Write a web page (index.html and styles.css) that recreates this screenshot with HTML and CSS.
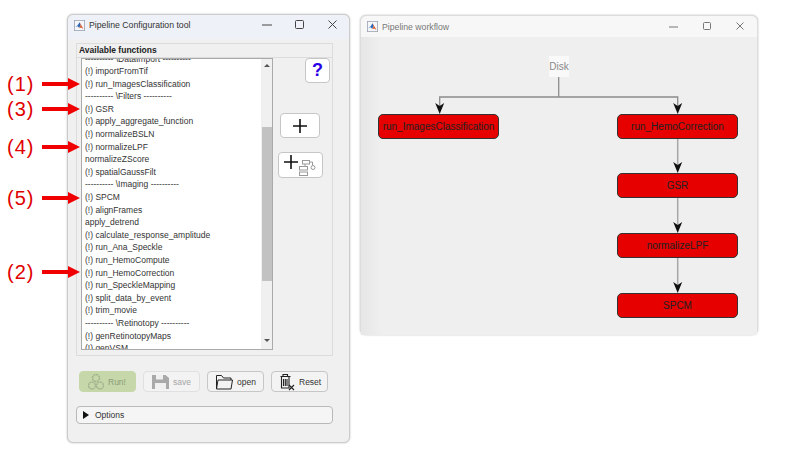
FILE: index.html
```html
<!DOCTYPE html>
<html lang="en">
<head>
    <meta charset="UTF-8">
    <title>Pipeline Configuration tool</title>
    <link rel="stylesheet" href="styles.css">
</head>
<body>
    <svg width="0" height="0" class="defs">
        <symbol id="matlab" viewBox="0 0 14 14">
            <rect x="0.5" y="0.5" width="13" height="13" fill="#f4f6fa" stroke="#9aa2b0"/>
            <path d="M1.500 8.500l3-1.500L7 3l1.500 3.500-2 3.500-2-2z" fill="#2a66b8"/>
            <path d="M7 3l2 3 3 5.500-3-2-2.500 1 2-3.500z" fill="#d9541e"/>
        </symbol>
    </svg>

    <div class="window config">
        <div class="titlebar">
            <svg class="app-icon"><use href="#matlab"/></svg>
            <span class="title">Pipeline Configuration tool</span>
            <div class="win-btns">
                <svg width="12" height="12" viewBox="0 0 12 12"><path d="M1 6h10" stroke="#444" fill="none"/></svg>
                <svg width="12" height="12" viewBox="0 0 12 12"><rect x="1.500" y="1.500" width="8" height="8" rx="1" stroke="#444" fill="none"/></svg>
                <svg width="12" height="12" viewBox="0 0 12 12"><path d="M1.500 1.500l8 8M9.500 1.500l-8 8" stroke="#444" fill="none"/></svg>
            </div>
        </div>

        <div class="panel">
            <div class="panel-head">Available functions</div>
            <div class="panel-body">
                <div class="listbox">
                    <div class="list-rows">
                        <div class="row clipped-top">---------- \DataImport ----------</div>
                        <div class="row">(!) importFromTif</div>
                        <div class="row">(!) run_ImagesClassification</div>
                        <div class="row">---------- \Filters ----------</div>
                        <div class="row">(!) GSR</div>
                        <div class="row">(!) apply_aggregate_function</div>
                        <div class="row">(!) normalizeBSLN</div>
                        <div class="row">(!) normalizeLPF</div>
                        <div class="row">normalizeZScore</div>
                        <div class="row">(!) spatialGaussFilt</div>
                        <div class="row">---------- \Imaging ----------</div>
                        <div class="row">(!) SPCM</div>
                        <div class="row">(!) alignFrames</div>
                        <div class="row">apply_detrend</div>
                        <div class="row">(!) calculate_response_amplitude</div>
                        <div class="row">(!) run_Ana_Speckle</div>
                        <div class="row">(!) run_HemoCompute</div>
                        <div class="row">(!) run_HemoCorrection</div>
                        <div class="row">(!) run_SpeckleMapping</div>
                        <div class="row">(!) split_data_by_event</div>
                        <div class="row">(!) trim_movie</div>
                        <div class="row">---------- \Retinotopy ----------</div>
                        <div class="row">(!) genRetinotopyMaps</div>
                        <div class="row">(!) genVSM</div>
                    </div>
                    <div class="scrollbar">
                        <span class="arrow-up"></span>
                        <span class="thumb"></span>
                        <span class="arrow-down"></span>
                    </div>
                </div>
                <div class="side-tools">
                    <button class="btn help">?</button>
                    <button class="btn add">
                        <svg width="16" height="16" viewBox="0 0 16 16"><path d="M8 1v14M1 8h14" stroke="#111" stroke-width="1.600" fill="none"/></svg>
                    </button>
                    <button class="btn add-tree">
                        <svg width="40" height="24" viewBox="0 0 40 24">
                            <path d="M10 2v14M3 9h14" stroke="#111" stroke-width="1.600" fill="none"/>
                            <g fill="none" stroke="#999">
                                <rect x="21.500" y="7.500" width="7" height="3.500"/>
                                <rect x="18.500" y="13.500" width="8" height="3.500"/>
                                <rect x="18.500" y="19" width="8" height="3.500"/>
                                <path d="M24 11v2.500M28.500 9h3v3"/>
                                <circle cx="32" cy="14.500" r="2"/>
                            </g>
                        </svg>
                    </button>
                </div>
            </div>
        </div>

        <div class="actions">
            <button class="btn action run">
                <svg width="16" height="18" viewBox="0 0 16 18">
                    <g fill="none" stroke="#9fb38d" stroke-width="1.500" stroke-dasharray="2 0.700">
                        <circle cx="8" cy="5" r="3.500"/>
                        <circle cx="4" cy="12.500" r="3.500"/>
                        <circle cx="12" cy="12.500" r="3.500"/>
                    </g>
                </svg>
                <span>Run!</span>
            </button>
            <button class="btn action save">
                <svg width="17" height="16" viewBox="0 0 17 16">
                    <path d="M0 1h13.500L17 4v11H0z" fill="#a9a9a9"/>
                    <rect x="4" y="1" width="7" height="4.500" fill="#f0f0f0"/>
                    <rect x="3" y="9" width="11" height="6" fill="#f0f0f0"/>
                </svg>
                <span>save</span>
            </button>
            <button class="btn action">
                <svg width="17" height="16" viewBox="0 0 17 16">
                    <path d="M0.500 15V1.500h5l2 2.500h7.500V6M0.500 15l1.500-9h14.500l-1.500 9z" fill="none" stroke="#222"/>
                </svg>
                <span>open</span>
            </button>
            <button class="btn action">
                <svg width="15" height="18" viewBox="0 0 15 18">
                    <path d="M0.500 3.500h10M3 3V1.500h4.500V3M1.500 4v11h7.500V4M3.500 6v7M5.300 6v7M7 6v7" fill="none" stroke="#222" stroke-width="1.100"/>
                    <path d="M9 12l5 5M14 12l-5 5" stroke="#222" stroke-width="1.100"/>
                </svg>
                <span>Reset</span>
            </button>
        </div>

        <div class="options">
            <span class="tri"></span>
            <span>Options</span>
        </div>
    </div>

    <div class="window workflow">
        <div class="titlebar">
            <svg class="app-icon"><use href="#matlab"/></svg>
            <span class="title">Pipeline workflow</span>
            <div class="win-btns faded">
                <svg width="12" height="12" viewBox="0 0 12 12"><path d="M0 6h9" stroke="#777" fill="none"/></svg>
                <svg width="12" height="12" viewBox="0 0 12 12"><rect x="1.500" y="1.500" width="7" height="7" rx="1" stroke="#777" fill="none"/></svg>
                <svg width="12" height="12" viewBox="0 0 12 12"><path d="M1.500 1.500l7 7M8.500 1.500l-7 7" stroke="#777" fill="none"/></svg>
            </div>
        </div>
        <div class="canvas">
            <svg class="edges" width="398" height="298" viewBox="0 0 398 298">
                <g fill="none" stroke="#8c8c8c" stroke-width="1.300">
                    <path d="M197.700 40v20"/>
                    <path d="M78.700 70V60H316.700V70"/>
                </g>
                <g fill="none" stroke="#a8a8a8" stroke-width="1.500">
                    <path d="M316.700 102v26M316.700 161v27M316.700 221v27"/>
                </g>
                <path class="head" d="M74.200 66l4.500 3 4.500-3-4.500 11z"/>
                <path class="head" d="M312.200 66l4.500 3 4.500-3-4.500 11z"/>
                <path class="head" d="M312.200 125l4.500 3 4.500-3-4.500 11z"/>
                <path class="head" d="M312.200 185l4.500 3 4.500-3-4.500 11z"/>
                <path class="head" d="M312.200 245l4.500 3 4.500-3-4.500 11z"/>
            </svg>
            <div class="disk">Disk</div>
            <div class="node n-images">run_ImagesClassification</div>
            <div class="node n-hemo">run_HemoCorrection</div>
            <div class="node n-gsr">GSR</div>
            <div class="node n-lpf">normalizeLPF</div>
            <div class="node n-spcm">SPCM</div>
        </div>
    </div>

    <div class="callout c1">(1)</div>
    <div class="callout c2">(2)</div>
    <div class="callout c3">(3)</div>
    <div class="callout c4">(4)</div>
    <div class="callout c5">(5)</div>
</body>
</html>
```

FILE: styles.css
```css
* {
    box-sizing: border-box;
}
html, body {
    margin: 0;
    height: 100%;
    overflow: hidden;
    background: #fff;
    font-family: "Liberation Sans", Arial, sans-serif;
}
.defs {
    position: absolute;
}
.window {
    position: absolute;
    background: #f0f0f0;
    border-radius: 6px;
    box-shadow: 0 0 2px #bbb;
}
.config {
    left: 67px;
    top: 14px;
    width: 283px;
    height: 429px;
    padding: 0 8px;
    border: 1px solid #ccc;
}
.workflow {
    left: 360px;
    top: 15px;
    width: 398px;
    height: 320px;
    border: 1px solid #ddd;
}
.titlebar {
    display: flex;
    align-items: center;
    height: 21px;
    gap: 4px;
    font-size: 8.700px;
    color: #333;
}
.config .titlebar {
    background: #eef1f7;
    margin: 0 -8px;
    padding: 0 6px 4px;
    height: 24px;
    border-radius: 6px 6px 0 0;
}
.workflow .titlebar {
    background: #f7f7f7;
    padding: 0 6px;
    color: #777;
    border-radius: 6px 6px 0 0;
}
.app-icon {
    width: 11px;
    height: 11px;
    flex: none;
}
.title {
    flex: 1;
}
.win-btns {
    display: flex;
    gap: 21px;
    margin-right: 4px;
}
.panel {
    margin-top: 4px;
    width: 257px;
    height: 313px;
    border: 1px solid #dcdcdc;
    display: flex;
    flex-direction: column;
}
.panel-head {
    height: 14px;
    padding: 1px 2px;
    font-size: 8.500px;
    font-weight: bold;
    color: #222;
    border-bottom: 1px solid #dcdcdc;
}
.panel-body {
    display: flex;
    padding: 0 0 0 4px;
    flex: 1;
}
.listbox {
    width: 192px;
    height: 292px;
    background: #fff;
    border: 1px solid #aaa;
    display: flex;
    overflow: hidden;
}
.list-rows {
    flex: 1;
    overflow: hidden;
    padding-left: 3px;
    font-size: 8.500px;
    color: #333;
}
.row {
    height: 12.600px;
    line-height: 12.600px;
    white-space: nowrap;
}
.clipped-top {
    margin-top: -6.500px;
}
.scrollbar {
    width: 11px;
    background: #f0f0f0;
    display: flex;
    flex-direction: column;
    align-items: center;
    padding-top: 5px;
}
.arrow-up {
    border: 3px solid transparent;
    border-top: 0;
    border-bottom: 3px solid #555;
}
.thumb {
    width: 10px;
    height: 154px;
    margin-top: 60px;
    background: #c2c2c2;
}
.arrow-down {
    margin-top: 58px;
    border: 3px solid transparent;
    border-bottom: 0;
    border-top: 3px solid #555;
}
.side-tools {
    flex: 1;
    display: flex;
    flex-direction: column;
    align-items: flex-start;
    padding-left: 5px;
}
.btn {
    display: flex;
    align-items: center;
    justify-content: center;
    padding: 0;
    background: #fff;
    border: 1px solid #c6c6c6;
    border-radius: 4px;
    font-family: inherit;
}
.help {
    width: 25px;
    height: 25px;
    margin: 0 0 30px 27px;
    font-size: 18px;
    font-weight: bold;
    color: #2a00e6;
}
.add {
    width: 40px;
    height: 25px;
    margin: 0 0 14px 2px;
}
.add-tree {
    width: 45px;
    height: 26px;
    align-items: flex-start;
}
.actions {
    display: flex;
    gap: 7px;
    margin: 15px 0 0 3px;
}
.action {
    width: 57px;
    height: 21px;
    gap: 4px;
    justify-content: flex-start;
    padding-left: 8px;
    background: #f3f3f3;
    font-size: 8.500px;
    color: #333;
}
.run {
    background: #c6d8a9;
    border-color: #c6d8a9;
    color: #8b9b7a;
}
.save {
    color: #a6a6a6;
    border-color: #e0e0e0;
}
.options {
    display: flex;
    align-items: center;
    gap: 6px;
    margin-top: 14px;
    width: 257px;
    height: 18px;
    padding-left: 6px;
    background: #f5f5f5;
    border: 1px solid #b9b9b9;
    border-radius: 4px;
    font-size: 8.500px;
    color: #333;
}
.tri {
    border: 4px solid transparent;
    border-right: 0;
    border-left: 6px solid #111;
}
.canvas {
    position: relative;
    height: 298px;
    background: linear-gradient(90deg, #e6e6e6 0, #efefef 20px);
}
.edges {
    position: absolute;
    left: 0;
    top: 0;
}
.head {
    fill: #111;
}
.disk {
    position: absolute;
    left: 188px;
    top: 19px;
    width: 20px;
    height: 21px;
    background: #f9f9f9;
    color: #888;
    font-size: 10px;
    line-height: 21px;
    text-align: center;
}
.node {
    position: absolute;
    width: 121px;
    height: 25px;
    background: #e60000;
    border: 1px solid #333;
    border-radius: 5px;
    font-size: 10px;
    line-height: 23px;
    text-align: center;
    color: #222;
    white-space: nowrap;
}
.n-images {
    left: 17px;
    top: 77px;
}
.n-hemo {
    left: 256px;
    top: 77px;
}
.n-gsr {
    left: 256px;
    top: 136px;
}
.n-lpf {
    left: 256px;
    top: 196px;
}
.n-spcm {
    left: 256px;
    top: 256px;
}
.callout {
    position: absolute;
    left: 7px;
    width: 74px;
    font-size: 20px;
    letter-spacing: 1px;
    line-height: 22px;
    color: #e00000;
}
.callout::before {
    content: "";
    position: absolute;
    left: 35px;
    top: 9px;
    width: 27px;
    height: 4px;
    background: #f00000;
}
.callout::after {
    content: "";
    position: absolute;
    left: 61px;
    top: 4.500px;
    border: 6.500px solid transparent;
    border-right: 0;
    border-left: 12px solid #f00000;
}
.c1 { top: 73px; }
.c2 { top: 261px; }
.c3 { top: 98px; }
.c4 { top: 136px; }
.c5 { top: 187px; }
```
